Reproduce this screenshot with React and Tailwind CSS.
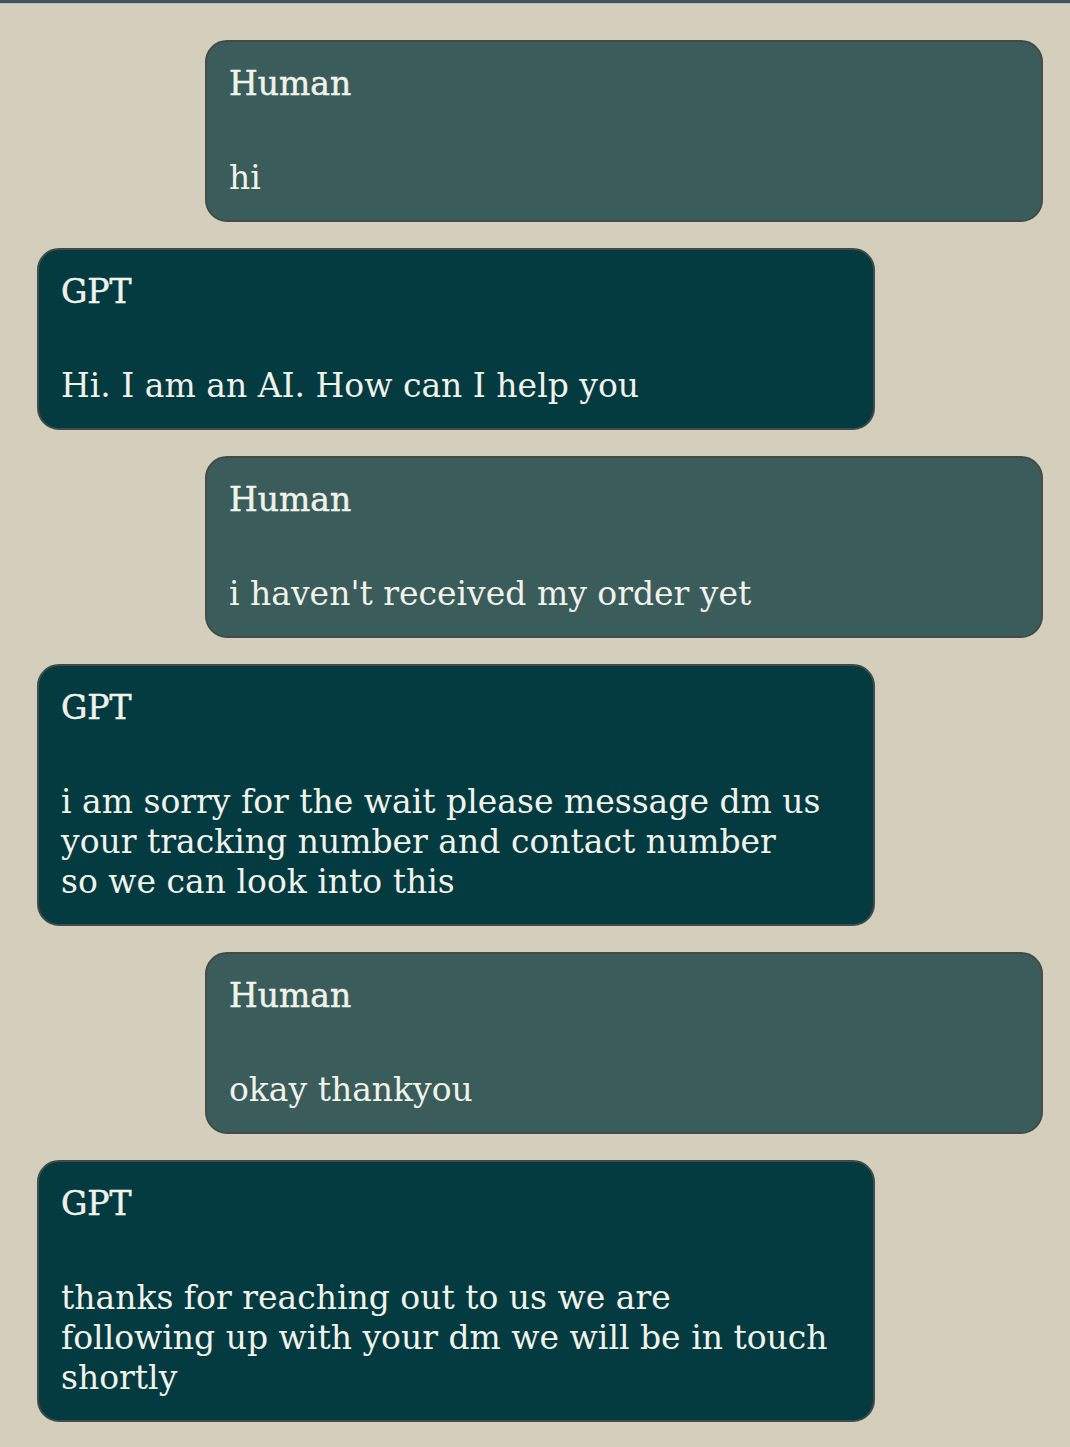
const messages = [
  { from: "Human", text: "hi" },
  { from: "GPT", text: "Hi. I am an AI. How can I help you" },
  { from: "Human", text: "i haven't received my order yet" },
  {
    from: "GPT",
    text: "i am sorry for the wait please message dm us\nyour tracking number and contact number\nso we can look into this",
  },
  { from: "Human", text: "okay thankyou" },
  {
    from: "GPT",
    text: "thanks for reaching out to us we are\nfollowing up with your dm we will be in touch\nshortly",
  },
];

function Bubble({ msg }) {
  const isHuman = msg.from === "Human";

  return (
    <div
      className={
        isHuman
          ? "ml-[205px] w-[838px] rounded-[22px] border-2 border-[#444b48] bg-[#3a5c5a] px-[22px] pt-[22px] pb-[22px]"
          : "ml-[37px] w-[838px] rounded-[22px] border-2 border-[#444b48] bg-[#033b40] px-[22px] pt-[22px] pb-[22px]"
      }
    >
      <p className="text-[33px] leading-[40px] text-[#f1f2ea] [-webkit-text-stroke:0.5px_#f1f2ea]">
        {msg.from}
      </p>
      <p className="mt-[54px] whitespace-pre-line text-[33px] leading-[40px] text-[#f1f2ea]">
        {msg.text}
      </p>
    </div>
  );
}

export default function App() {
  return (
    <div
      className="min-h-screen bg-[#d3cfbc]"
      style={{ fontFamily: '"DejaVu Serif", serif' }}
    >
      {/* top strip */}
      <div className="h-[3px] bg-[#3d5658]" />
      <div className="h-[1px] bg-[#b9c1b6]" />

      <div className="flex flex-col gap-[26px] pt-[36px] pb-[26px]">
        {messages.map((m, i) => (
          <Bubble key={i} msg={m} />
        ))}
      </div>
    </div>
  );
}
